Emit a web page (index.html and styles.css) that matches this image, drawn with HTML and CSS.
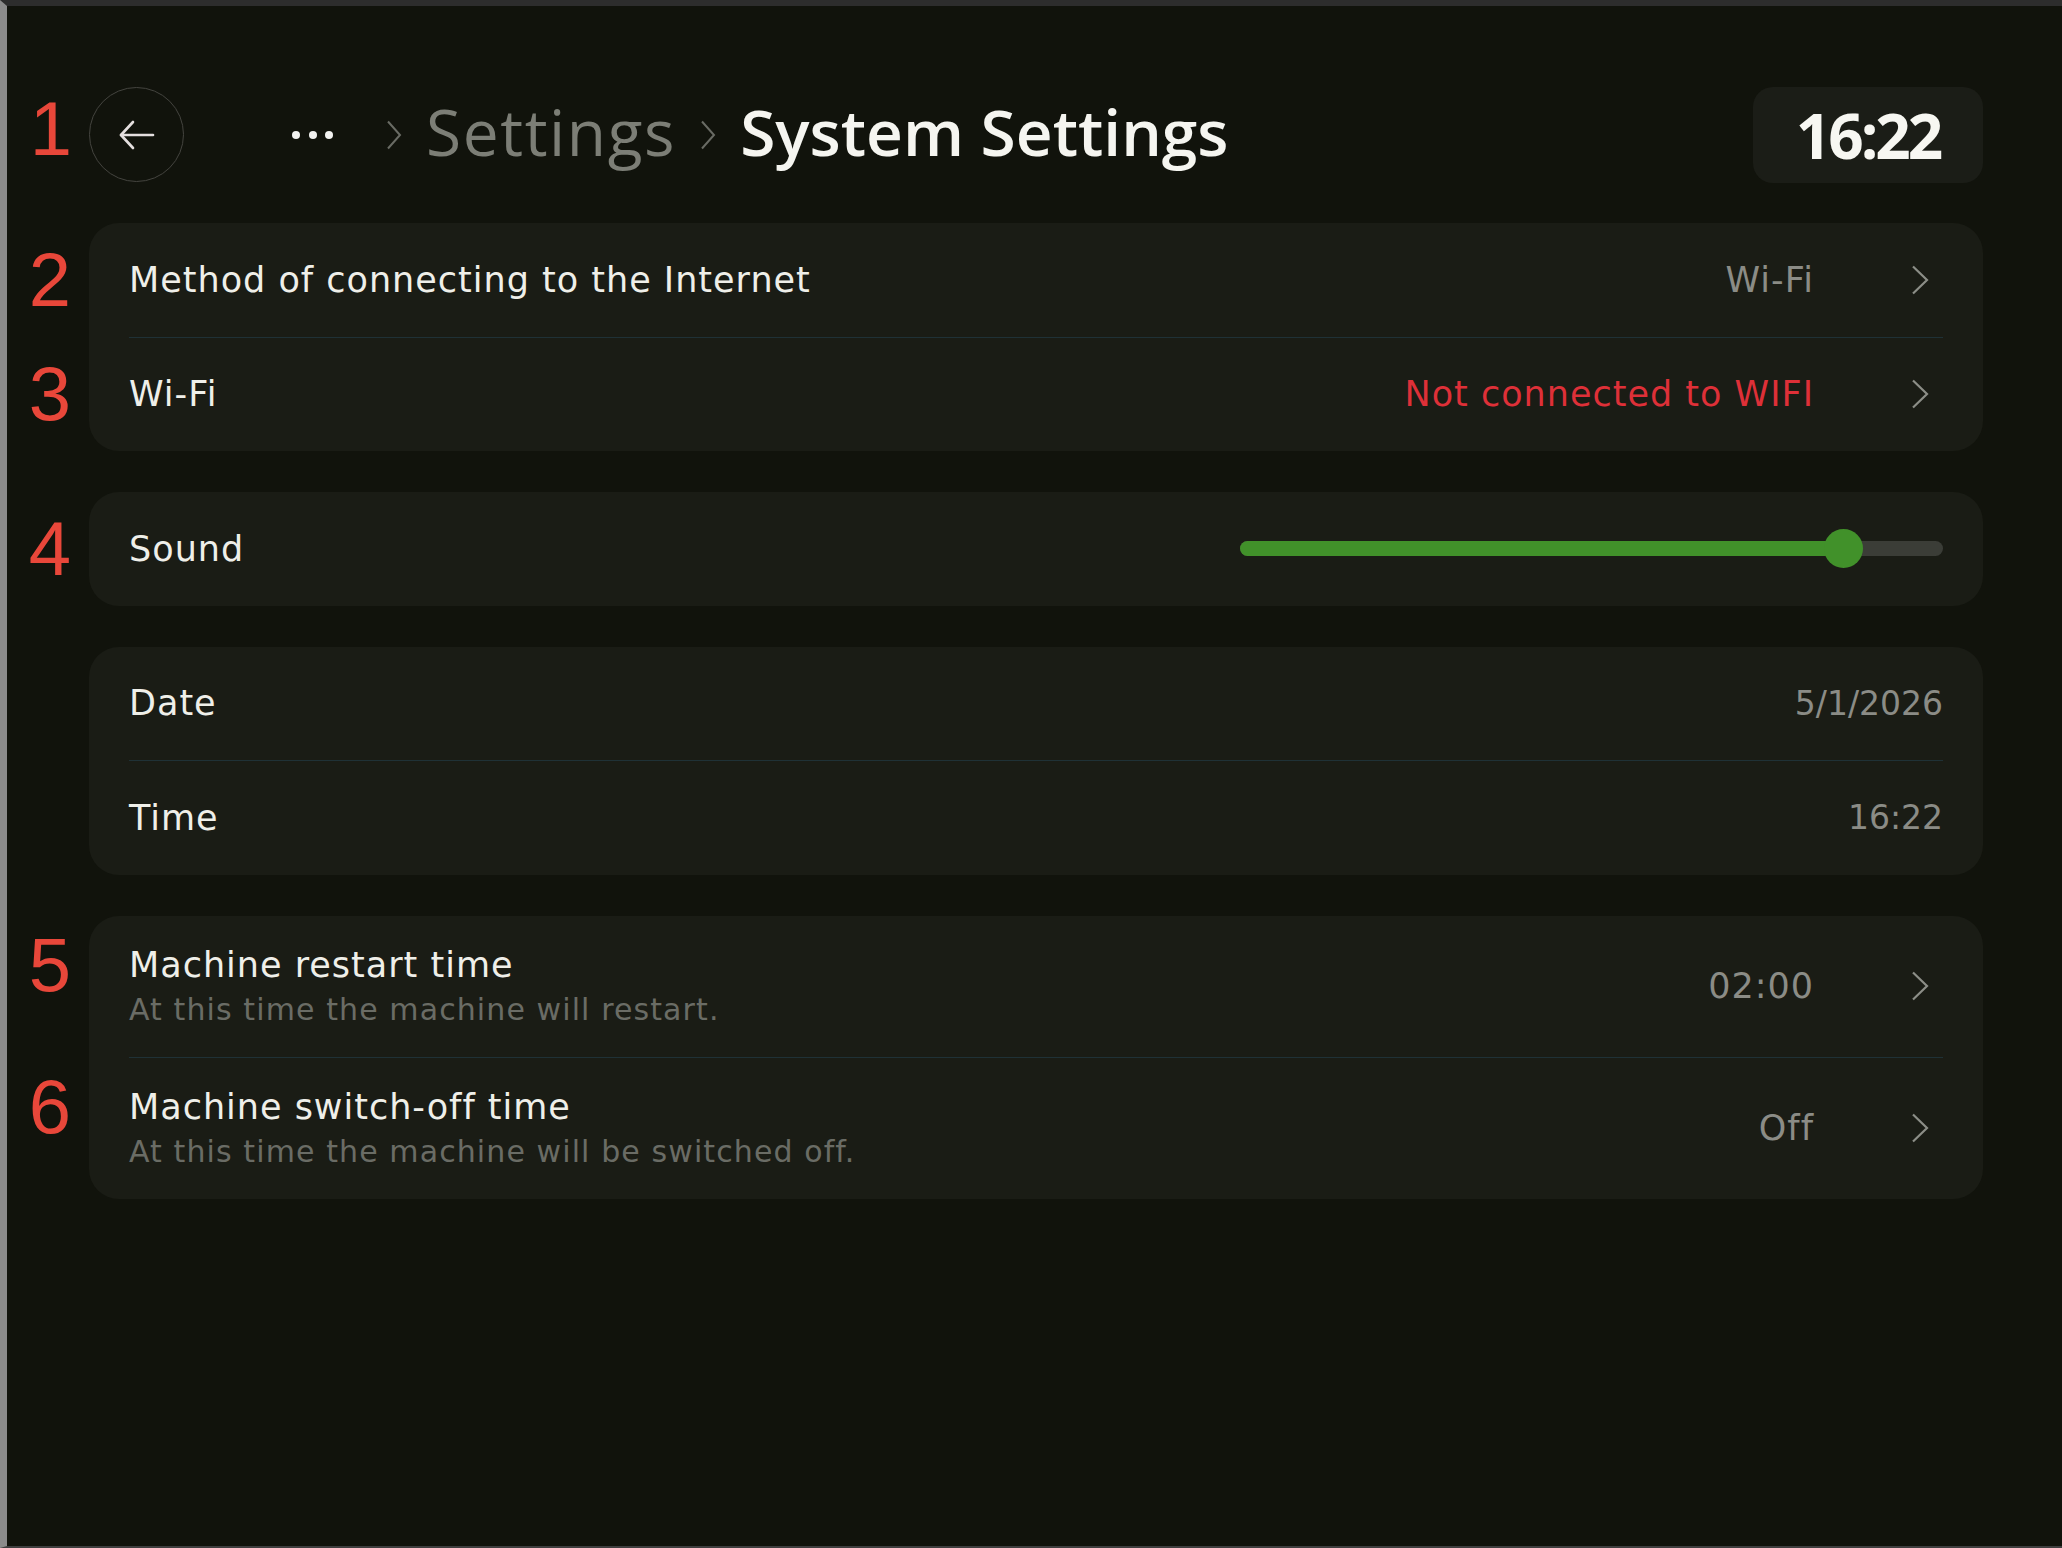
FILE: index.html
```html
<!DOCTYPE html>
<html>
<head>
	<meta charset="UTF-8">
	<title>System Settings</title>
	<link rel="stylesheet" href="styles.css">
</head>
<body>
	<div class="screen">
		<div class="header">
			<button class="back">
				<span class="mark">1</span>
				<svg class="back-arrow" viewBox="0 0 36 30" width="36" height="30">
					<polyline points="14,2 2,15 14,28" />
					<line x1="2" y1="15" x2="34" y2="15" />
				</svg>
			</button>
			<span class="dots"><i></i><i></i><i></i></span>
			<svg class="crumb-arrow first" viewBox="0 0 16 30" width="16" height="30">
				<polyline points="2,1.5 14,15 2,28.5" />
			</svg>
			<span class="crumb">Settings</span>
			<svg class="crumb-arrow" viewBox="0 0 16 30" width="16" height="30">
				<polyline points="2,1.5 14,15 2,28.5" />
			</svg>
			<span class="crumb current">System Settings</span>
			<div class="clock">16:22</div>
		</div>

		<!-- 网络 -->
		<div class="card">
			<div class="row">
				<span class="label"><span class="mark">2</span>Method of connecting to the Internet</span>
				<span class="value">Wi-Fi</span>
				<svg class="chev" viewBox="0 0 18 30" width="18" height="30"><polyline points="2,1.5 16,15 2,28.5" /></svg>
			</div>
			<div class="row">
				<span class="label"><span class="mark">3</span>Wi-Fi</span>
				<span class="value alert">Not connected to WIFI</span>
				<svg class="chev" viewBox="0 0 18 30" width="18" height="30"><polyline points="2,1.5 16,15 2,28.5" /></svg>
			</div>
		</div>

		<!-- 声音 -->
		<div class="card">
			<div class="row">
				<span class="label"><span class="mark">4</span>Sound</span>
				<div class="slider">
					<div class="fill" style="width:85.8%"></div>
					<span class="thumb" style="left:85.8%"></span>
				</div>
			</div>
		</div>

		<!-- 日期时间 -->
		<div class="card">
			<div class="row">
				<span class="label">Date</span>
				<span class="value num">5/1/2026</span>
			</div>
			<div class="row">
				<span class="label">Time</span>
				<span class="value num">16:22</span>
			</div>
		</div>

		<!-- 重启 / 关机 -->
		<div class="card">
			<div class="row tall">
				<div class="text">
					<span class="label"><span class="mark">5</span>Machine restart time</span>
					<span class="sub">At this time the machine will restart.</span>
				</div>
				<span class="value">02:00</span>
				<svg class="chev" viewBox="0 0 18 30" width="18" height="30"><polyline points="2,1.5 16,15 2,28.5" /></svg>
			</div>
			<div class="row tall">
				<div class="text">
					<span class="label"><span class="mark">6</span>Machine switch-off time</span>
					<span class="sub">At this time the machine will be switched off.</span>
				</div>
				<span class="value">Off</span>
				<svg class="chev" viewBox="0 0 18 30" width="18" height="30"><polyline points="2,1.5 16,15 2,28.5" /></svg>
			</div>
		</div>
	</div>
</body>
</html>
```

FILE: styles.css
```css
html,body{
	margin:0;
	padding:0;
	background:#11130c;
}
.screen{
	min-height:1548px;
	box-sizing:border-box;
	border-top:6px solid #2d2d2d;
	border-left:7px solid #8b8b8b;
	border-bottom:2px solid #3f3f3f;
	padding:81px 79px 0 82px;
	background:#11130c;
	font-family:"DejaVu Sans","Noto Sans",sans-serif;
	color:#efefe9;
}

/* 顶部导航 */
.header{
	display:flex;
	align-items:center;
	height:95px;
	margin-bottom:41px;
}
.back{
	position:relative;
	width:95px;
	height:95px;
	box-sizing:border-box;
	padding:0;
	border-radius:50%;
	border:1.5px solid #44443f;
	background:none;
	display:flex;
	align-items:center;
	justify-content:center;
}
.back-arrow{
	fill:none;
	stroke:#e4dfdf;
	stroke-width:2.6;
	stroke-linecap:round;
	stroke-linejoin:round;
}
.back .mark{
	right:calc(100% + 18px);
	top:calc(50% - 6px);
}
.dots{
	display:flex;
	gap:8.5px;
	margin-left:108px;
}
.dots i{
	width:8px;
	height:8px;
	border-radius:50%;
	background:#f2f2f0;
}
.crumb-arrow{
	margin:0 24px;
	fill:none;
	stroke:#696b64;
	stroke-width:2;
}
.crumb-arrow.first{
	margin-left:53px;
}
.crumb{
	margin-bottom:6px;
	font-family:"Open Sans","DejaVu Sans",sans-serif;
	font-size:64px;
	font-weight:500;
	letter-spacing:1.6px;
	color:#7c7e76;
}
.crumb.current{
	font-weight:600;
	letter-spacing:0;
	color:#f5f5f0;
}
.clock{
	margin-left:auto;
	width:230px;
	height:96px;
	border-radius:20px;
	background:#1b1d17;
	display:flex;
	align-items:center;
	justify-content:center;
	font-family:"Open Sans","DejaVu Sans",sans-serif;
	font-size:62px;
	font-weight:700;
	letter-spacing:-3px;
	color:#f7f7f2;
}

/* 卡片 */
.card{
	background:#1a1c15;
	border-radius:30px;
	padding:0 40px;
	margin-bottom:41px;
}
.row{
	display:flex;
	align-items:center;
	height:113.5px;
}
.row + .row{
	border-top:1px solid #1f3136;
}
.row.tall{
	height:141px;
}
.label{
	position:relative;
	font-size:35px;
	letter-spacing:1px;
	color:#efefe9;
}
.text{
	display:flex;
	flex-direction:column;
}
.sub{
	margin-top:7px;
	font-size:30px;
	letter-spacing:1.1px;
	color:#6a6c65;
}
.value{
	margin-left:auto;
	font-size:35px;
	letter-spacing:1px;
	color:#8b8c86;
}
.value.num{
	font-size:33px;
	letter-spacing:0;
}
.value.alert{
	color:#de3038;
}
.chev{
	margin-left:97px;
	margin-right:14px;
	fill:none;
	stroke:#8c8e87;
	stroke-width:2.2;
}

/* 标注数字 */
.mark{
	position:absolute;
	right:calc(100% + 58px);
	top:50%;
	transform:translateY(-50%);
	font-family:"Liberation Sans",Arial,sans-serif;
	font-size:76px;
	line-height:76px;
	letter-spacing:0;
	color:#e8473a;
}

/* 音量滑块 */
.slider{
	position:relative;
	margin-left:auto;
	width:703px;
	height:15px;
	border-radius:8px;
	background:#3b3d37;
}
.fill{
	height:100%;
	border-radius:8px;
	background:#41912a;
}
.thumb{
	position:absolute;
	top:50%;
	width:39px;
	height:39px;
	margin:-19.5px 0 0 -19.5px;
	border-radius:50%;
	background:#41912a;
}
```
